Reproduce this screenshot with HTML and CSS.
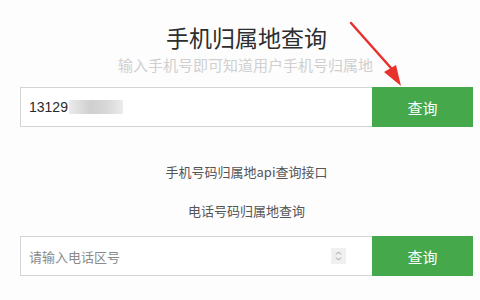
FILE: index.html
```html
<!DOCTYPE html>
<html lang="zh-CN">
<head>
    <meta charset="UTF-8">
    <title>手机归属地查询</title>
    <link rel="stylesheet" href="styles.css">
</head>
<body>
    <div class="page">
        <h1 class="title">手机归属地查询</h1>
        <p class="subtitle">输入手机号即可知道用户手机号归属地</p>
        <div class="search">
            <div class="field">
                <span class="num">13129</span><span class="blur"></span>
            </div>
            <button class="btn">查询</button>
        </div>
        <p class="link">手机号码归属地api查询接口</p>
        <p class="label">电话号码归属地查询</p>
        <div class="search">
            <div class="field">
                <span class="placeholder">请输入电话区号</span>
                <span class="spin">
                    <svg width="9" height="12" viewBox="0 0 9 12"><path d="M2 4.5 L4.5 2 L7 4.5 M2 7.5 L4.5 10 L7 7.5" fill="none" stroke="#9a9a9a" stroke-width="1"/></svg>
                </span>
            </div>
            <button class="btn">查询</button>
        </div>
    </div>
    <svg class="arrow" width="80" height="80" viewBox="0 0 80 80">
        <path d="M10 13 L50 58" stroke="#e8302c" stroke-width="2.5" stroke-linecap="round"/>
        <path d="M43 62 L60 76 L55 55 Z" fill="#e8302c"/>
    </svg>
</body>
</html>
```

FILE: styles.css
```css
*{
    margin: 0;
    padding: 0;
    box-sizing: border-box;
}
body{
    width: 480px;
    height: 300px;
    background-color: #fdfdfd;
    font-family: "Noto Sans CJK SC", "Liberation Sans", sans-serif;
    position: relative;
    overflow: hidden;
}
.page{
    padding: 21px 7px 0 20px;
    display: flex;
    flex-direction: column;
    align-items: center;
}
.title{
    font-size: 23px;
    font-weight: normal;
    color: #2e2e2e;
    line-height: 32px;
}
.subtitle{
    font-size: 15px;
    color: #d0d0d0;
    line-height: 20px;
    margin-top: 2px;
    margin-right: 2px;
}
.search{
    width: 453px;
    height: 40px;
    display: flex;
    margin-top: 12px;
}
.field{
    flex: 1;
    border: 1px solid #d4d4d4;
    border-right: none;
    background: #fff;
    display: flex;
    align-items: center;
    padding-left: 8px;
    padding-right: 26px;
}
.num{
    font-family: "Liberation Sans", sans-serif;
    font-size: 14px;
    color: #2a2a2a;
}
.blur{
    width: 54px;
    height: 14px;
    margin-left: 1px;
    background: linear-gradient(90deg, #ebebeb, #cfcfcf 40%, #d8d8d8 70%, #ececec);
}
.placeholder{
    flex: 1;
    font-size: 13px;
    color: #8a8a8a;
}
.spin{
    width: 15px;
    height: 16px;
    background: #f0f0f0;
    display: flex;
    align-items: center;
    justify-content: center;
}
.btn{
    width: 101px;
    border: none;
    background: #45a94b;
    color: #fff;
    font-family: "Noto Sans CJK SC", sans-serif;
    font-size: 15px;
}
.link{
    font-size: 13px;
    color: #555;
    margin-top: 36px;
    line-height: 18px;
}
.label{
    font-size: 13px;
    color: #555;
    margin-top: 21px;
    line-height: 18px;
}
.label + .search{
    margin-top: 16px;
}
.arrow{
    position: absolute;
    left: 341px;
    top: 10px;
}
```
